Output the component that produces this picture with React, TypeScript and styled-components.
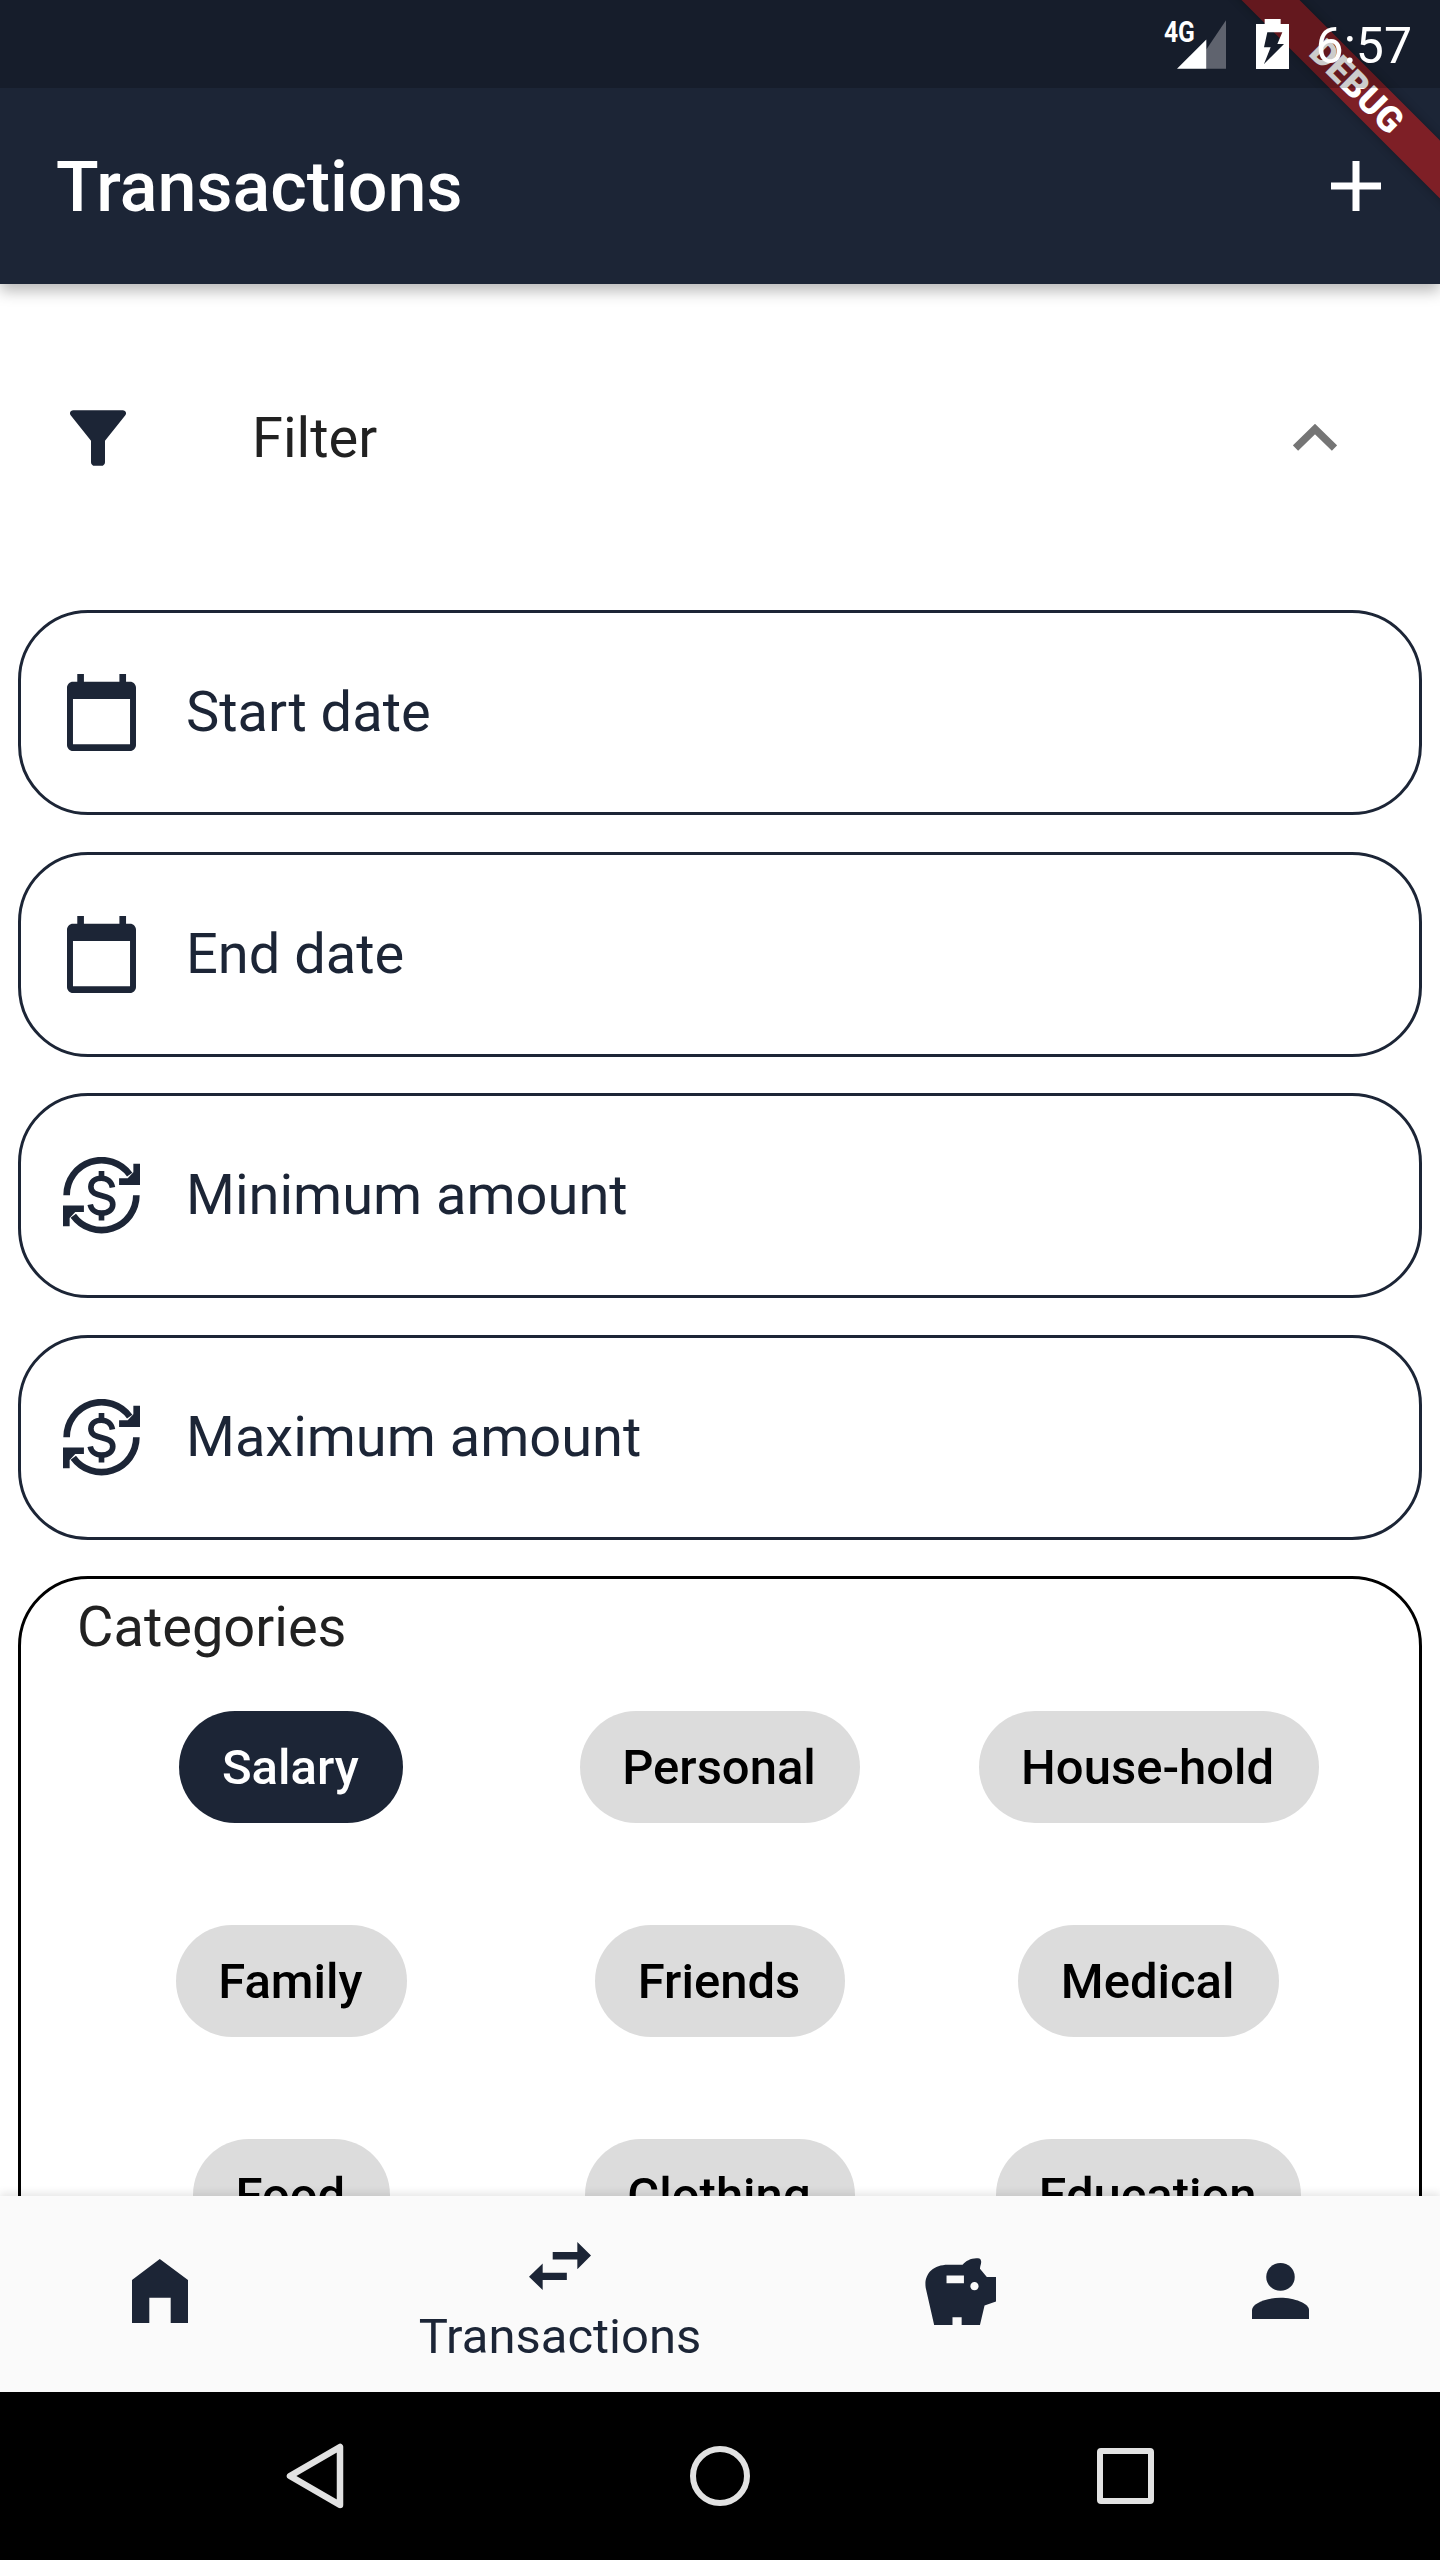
import styled, { createGlobalStyle } from 'styled-components'

const NAVY = '#1c2536'

const GlobalStyle = createGlobalStyle`
  html, body {
    margin: 0;
    padding: 0;
    background: #fff;
    font-family: Roboto, 'Liberation Sans', sans-serif;
  }
  * {
    box-sizing: border-box;
  }
`

const FIELDS = [
  { label: 'Start date', icon: 'calendar' },
  { label: 'End date', icon: 'calendar' },
  { label: 'Minimum amount', icon: 'money' },
  { label: 'Maximum amount', icon: 'money' },
]

const CATEGORIES = ['Salary', 'Personal', 'House-hold', 'Family', 'Friends', 'Medical', 'Food', 'Clothing', 'Education']

const CalendarIcon = () => (
  <FieldSvg $width={69} $height={77} viewBox="200 222 208 231" preserveAspectRatio="none">
    <path
      fillRule="evenodd"
      fill={NAVY}
      d="M231 222h20v23h107v-23h20v23h12c10 0 18 8 18 18v172c0 10-8 18-18 18H218c-10 0-18-8-18-18V263c0-10 8-18 18-18h13zM218 297v136h172V297z"
    />
  </FieldSvg>
)

const MoneyIcon = () => (
  <FieldSvg $width={77} $height={77} viewBox="38 38 232 232">
    <g fill="none" stroke={NAVY} strokeWidth="20">
      <path d="M49 153a105 105 0 0 1 190-62" />
      <path d="M259 153a105 105 0 0 1-190 62" />
      <path strokeWidth="17" d="M187 130c-3-17-16-28-33-28-20 0-32 11-32 26 0 37 66 17 66 53 0 15-14 26-34 26-18 0-31-11-34-26" />
      <path strokeWidth="17" d="M154 80v22M154 207v22" />
    </g>
    <path fill={NAVY} d="M207 122v-20h26l17-18V58h20v64z" />
    <path fill={NAVY} d="M101 184v20H75l-17 18v25H38v-63z" />
  </FieldSvg>
)

export default function App() {
  return (
    <Screen>
      <GlobalStyle />
      <AppBar>
        <Title>Transactions</Title>
        <svg width="50" height="50" viewBox="0 0 50 50">
          <path fill="#fff" d="M21.5 0h7v21.5H50v7H28.5V50h-7V28.5H0v-7h21.5z" />
        </svg>
        <Ribbon>
          <RibbonText>DEBUG</RibbonText>
        </Ribbon>
        <StatusBar>
          <SignalWrap>
            <NetworkType>4G</NetworkType>
            <svg width="49" height="49" viewBox="234 57 147 146">
              <path fill="#5f636e" d="M381 57v146H322v-58z" />
              <path fill="#fff" d="M234 203l88-88v88z" />
            </svg>
          </SignalWrap>
          <svg width="33" height="50" viewBox="471 55 99 150">
            <path
              fillRule="evenodd"
              fill="#fff"
              d="M497 55h48v15h25v135h-99V70h26zM505 95h45l-15 35h20l-60 60 20-50h-20z"
            />
          </svg>
          <Clock>6:57</Clock>
        </StatusBar>
      </AppBar>

      <Content>
        <FilterRow>
          <svg width="56" height="56" viewBox="210 1230 168 167">
            <path
              fill={NAVY}
              d="M220 1230h148c9 0 13 9 8 15l-61 77v64c0 6-5 11-11 11h-20c-6 0-11-5-11-11v-64l-61-77c-5-6-1-15 8-15z"
            />
          </svg>
          <FilterLabel>Filter</FilterLabel>
          <svg width="44" height="28" viewBox="0 0 44 28">
            <path fill="none" stroke="#757575" strokeWidth="7.5" d="M2.5 24L22 5 41.5 24" />
          </svg>
        </FilterRow>

        <FieldList>
          {FIELDS.map((field) => (
            <Field key={field.label}>
              <FieldIconSlot>{field.icon === 'calendar' ? <CalendarIcon /> : <MoneyIcon />}</FieldIconSlot>
              <FieldLabel>{field.label}</FieldLabel>
            </Field>
          ))}
          <CategoriesBox>
            <CategoriesLabel>Categories</CategoriesLabel>
            <ChipGrid>
              {CATEGORIES.map((name, index) => (
                <ChipCell key={name}>
                  <Chip $selected={index === 0}>{name}</Chip>
                </ChipCell>
              ))}
            </ChipGrid>
          </CategoriesBox>
        </FieldList>
      </Content>

      <BottomNav>
        <NavItem>
          <NavSvg $width={56} $height={64} viewBox="287 358 123 190" preserveAspectRatio="none">
            <path fill={NAVY} d="M348 358l62 62v128h-38v-75h-47v75h-38V420z" />
          </NavSvg>
        </NavItem>
        <NavItem $selected>
          <NavSvg $width={62} $height={48} viewBox="1152 305 136 145" preserveAspectRatio="none">
            <path fill={NAVY} d="M1204 335h54v-30l30 41-30 41v-29h-54zM1235 398h-53v-28l-30 40 30 40v-30h53z" />
          </NavSvg>
          <NavLabel>Transactions</NavLabel>
        </NavItem>
        <NavItem>
          <NavSvg $width={71} $height={67} viewBox="445 348 155 200" preserveAspectRatio="none">
            <path
              fillRule="evenodd"
              fill={NAVY}
              d="M465 548l-18-108c-6-40 13-72 48-72h32c8-13 23-23 38-18 6 10 0 20 0 30l15 25h20v73l-25 12-10 58h-40v-23h-20v23zM492 400v23h38v-23zM553 420c-5 0-9 5-9 12s4 12 9 12 9-5 9-12-4-12-9-12z"
            />
          </NavSvg>
        </NavItem>
        <NavItem>
          <NavSvg $width={57} $height={56} viewBox="1158 368 124 169" preserveAspectRatio="none">
            <ellipse cx="1220" cy="410" rx="31" ry="42" fill={NAVY} />
            <path fill={NAVY} d="M1158 537v-27c0-20 32-37 62-37s62 17 62 37v27z" />
          </NavSvg>
        </NavItem>
      </BottomNav>

      <SystemBar>
        <SystemButton>
          <svg width="58" height="66" viewBox="0 0 58 66">
            <path fill="none" stroke="#e2e2e2" strokeWidth="6.5" strokeLinejoin="round" d="M54 4v58L4 33z" />
          </svg>
        </SystemButton>
        <SystemButton>
          <HomeRing />
        </SystemButton>
        <SystemButton>
          <RecentsSquare />
        </SystemButton>
      </SystemBar>
    </Screen>
  )
}

const Screen = styled.div`
  width: 1440px;
  height: 2560px;
  display: flex;
  flex-direction: column;
  overflow: hidden;
  position: relative;
  background: #fff;
`

const AppBar = styled.header`
  position: relative;
  flex: none;
  z-index: 2;
  height: 284px;
  padding: 88px 59px 0 56px;
  display: flex;
  align-items: center;
  justify-content: space-between;
  overflow: visible;
  background: ${NAVY};
  box-shadow: 0 7px 14px rgba(0, 0, 0, 0.28);
`

const Title = styled.h1`
  margin: 2px 0 0;
  font-size: 70px;
  font-weight: 500;
  color: #fff;
`

const Ribbon = styled.div`
  position: absolute;
  left: 1157px;
  top: 66px;
  width: 400px;
  height: 41px;
  display: flex;
  align-items: center;
  justify-content: center;
  background: rgba(183, 28, 28, 0.63);
  box-shadow: 0 0 10px rgba(0, 0, 0, 0.3);
  transform: rotate(45deg);
`

const RibbonText = styled.span`
  font-size: 36px;
  font-weight: 900;
  line-height: 1;
  color: #fff;
`

const StatusBar = styled.div`
  position: absolute;
  left: 0;
  top: 0;
  width: 100%;
  height: 88px;
  padding-right: 28px;
  display: flex;
  align-items: center;
  justify-content: flex-end;
  background: rgba(0, 0, 0, 0.2);
`

const SignalWrap = styled.div`
  position: relative;
  width: 49px;
  height: 49px;
  margin-right: 30px;
`

const NetworkType = styled.span`
  position: absolute;
  left: -13px;
  top: -3px;
  font-size: 30px;
  font-weight: 700;
  line-height: 30px;
  color: #fff;
  transform: scaleX(0.82);
  transform-origin: left center;
`

const Clock = styled.span`
  margin: 3px 0 0 27px;
  font-size: 50px;
  line-height: 82px;
  color: #fff;
`

const Content = styled.main`
  flex: 1;
  min-height: 0;
  overflow: hidden;
  padding-top: 56px;
`

const FilterRow = styled.div`
  height: 196px;
  padding: 0 103px 0 70px;
  display: flex;
  align-items: center;
`

const FilterLabel = styled.span`
  flex: 1;
  margin-left: 126px;
  font-size: 56px;
  color: #212121;
`

const FieldList = styled.div`
  margin: 74px 18px 0;
  display: flex;
  flex-direction: column;
  gap: 36.5px;
`

const Field = styled.div`
  height: 205px;
  padding-left: 38px;
  display: flex;
  align-items: center;
  border: 3.5px solid ${NAVY};
  border-radius: 70px;
`

const FieldIconSlot = styled.div`
  width: 84px;
  margin-right: 43px;
  display: flex;
  align-items: center;
  justify-content: center;
`

const FieldSvg = styled.svg<{ $width: number; $height: number }>`
  width: ${(p) => p.$width}px;
  height: ${(p) => p.$height}px;
`

const FieldLabel = styled.span`
  margin-top: -1px;
  font-size: 56px;
  color: ${NAVY};
`

const CategoriesBox = styled.section`
  padding: 15px 56px 140px;
  border: 3.5px solid #000;
  border-radius: 70px;
`

const CategoriesLabel = styled.div`
  margin-left: 0;
  font-size: 56px;
  line-height: 66px;
  color: #212121;
`

const ChipGrid = styled.div`
  margin-top: 51px;
  display: grid;
  grid-template-columns: repeat(3, 1fr);
  row-gap: 102px;
`

const ChipCell = styled.div`
  display: flex;
  justify-content: center;
`

const Chip = styled.span<{ $selected?: boolean }>`
  height: 112px;
  padding: 0 44.5px 0 42.5px;
  display: flex;
  align-items: center;
  border-radius: 56px;
  font-size: 49px;
  font-weight: 500;
  color: ${(p) => (p.$selected ? '#fff' : '#000')};
  background: ${(p) => (p.$selected ? NAVY : '#dcdcdc')};
`

const BottomNav = styled.nav`
  flex: none;
  z-index: 1;
  height: 196px;
  display: flex;
  background: #fafafa;
  box-shadow: 0 -3px 8px rgba(0, 0, 0, 0.1);
`

const NavItem = styled.div<{ $selected?: boolean }>`
  flex: ${(p) => (p.$selected ? 1.5 : 1)};
  padding-top: ${(p) => (p.$selected ? 46 : 0)}px;
  padding-bottom: ${(p) => (p.$selected ? 0 : 6)}px;
  display: flex;
  flex-direction: column;
  align-items: center;
  justify-content: ${(p) => (p.$selected ? 'flex-start' : 'center')};
`

const NavSvg = styled.svg<{ $width: number; $height: number }>`
  flex: none;
  width: ${(p) => p.$width}px;
  height: ${(p) => p.$height}px;
`

const NavLabel = styled.span`
  margin-top: 18px;
  font-size: 49px;
  line-height: 58px;
  color: ${NAVY};
`

const SystemBar = styled.div`
  flex: none;
  z-index: 2;
  height: 168px;
  display: flex;
  justify-content: center;
  background: #000;
`

const SystemButton = styled.div`
  width: 405px;
  display: flex;
  align-items: center;
  justify-content: center;
`

const HomeRing = styled.div`
  width: 60px;
  height: 60px;
  border: 6.5px solid #e2e2e2;
  border-radius: 50%;
`

const RecentsSquare = styled.div`
  width: 57px;
  height: 56px;
  border: 6.5px solid #e2e2e2;
  border-radius: 4px;
`
